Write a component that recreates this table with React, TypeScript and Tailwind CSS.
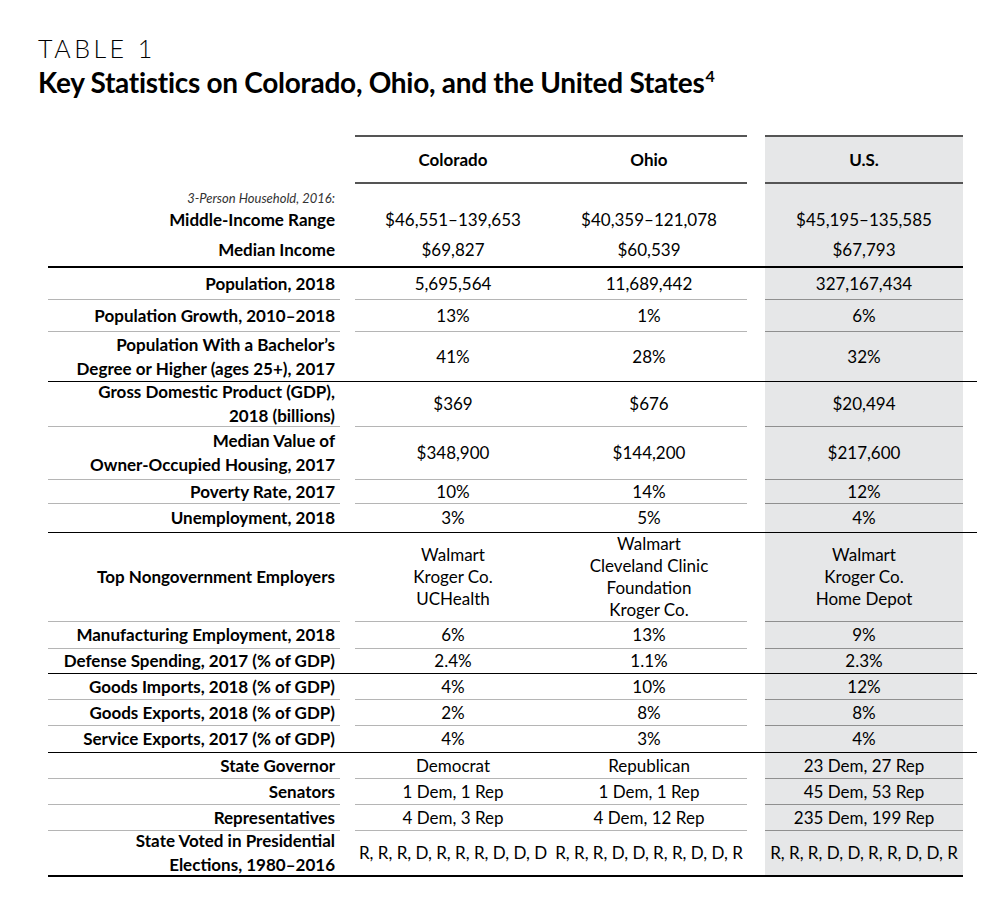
import React from "react";

type Line = "gray" | "none";

type RowProps = {
  label: React.ReactNode;
  co: React.ReactNode;
  oh: React.ReactNode;
  us: React.ReactNode;
  h: string;
  line?: Line;
};

function Row({ label, co, oh, us, h, line = "gray" }: RowProps) {
  const b = line === "gray";
  return (
    <div className={`flex ${h}`}>
      <div
        className={`w-[292px] flex items-center justify-end pr-[5px] text-right font-bold leading-[24px] ${
          b ? "border-b border-[#b5b5b5]" : ""
        }`}
      >
        {label}
      </div>
      <div className="w-[15px]" />
      <div
        className={`w-[196px] flex items-center justify-center text-center leading-[22px] whitespace-nowrap ${
          b ? "border-b border-[#b5b5b5]" : ""
        }`}
      >
        {co}
      </div>
      <div
        className={`w-[196px] flex items-center justify-center text-center leading-[22px] whitespace-nowrap ${
          b ? "border-b border-[#b5b5b5]" : ""
        }`}
      >
        {oh}
      </div>
      <div className="w-[18px]" />
      <div
        className={`w-[198px] bg-[#e6e7e8] flex items-center justify-center text-center leading-[22px] whitespace-nowrap ${
          b ? "border-b border-[#8f8f8f]" : ""
        }`}
      >
        {us}
      </div>
    </div>
  );
}

function BlackLine({ wide = true, thick = false }: { wide?: boolean; thick?: boolean }) {
  return (
    <div
      className={`${wide ? "w-[929px]" : "w-[915px]"} ${thick ? "h-[2px]" : "h-px"} bg-black`}
    />
  );
}

function Stack({ items }: { items: string[] }) {
  return (
    <div className="flex flex-col items-center">
      {items.map((t) => (
        <span key={t}>{t}</span>
      ))}
    </div>
  );
}

export default function App() {
  return (
    <div
      className="w-[1000px] h-[905px] bg-white text-black overflow-hidden"
      style={{ fontFamily: "Lato, 'Open Sans', sans-serif" }}
    >
      <div className="pl-[38px] pt-[34px]">
        <div className="text-[25px] font-light tracking-[0.14em] leading-[28px]">TABLE 1</div>
        <div className="text-[28px] font-bold leading-[36px] tracking-[-0.01em] mt-[2px]">
          Key Statistics on Colorado, Ohio, and the United States
          <sup className="text-[16px] relative -top-[11px] ml-[1px]">4</sup>
        </div>
      </div>

      <div className="pl-[48px] mt-[35px] text-[17px]">
        {/* header */}
        <div className="flex">
          <div className="w-[307px]" />
          <div className="w-[392px] flex flex-col">
            <div className="h-[2px] bg-[#555]" />
            <div className="flex h-[45px]">
              <div className="w-[196px] flex items-center justify-center font-bold">Colorado</div>
              <div className="w-[196px] flex items-center justify-center font-bold">Ohio</div>
            </div>
            <div className="h-[2px] bg-[#555]" />
          </div>
          <div className="w-[18px]" />
          <div className="w-[198px] flex flex-col bg-[#e6e7e8]">
            <div className="h-[2px] bg-[#555]" />
            <div className="h-[45px] flex items-center justify-center font-bold">U.S.</div>
            <div className="h-[2px] bg-[#555]" />
          </div>
        </div>

        {/* income block */}
        <Row
          h="h-[22px]"
          line="none"
          label={<span className="italic font-normal text-[13px] text-[#333] pt-[6px]">3-Person Household, 2016:</span>}
          co=""
          oh=""
          us=""
        />
        <Row h="h-[28px]" line="none" label="Middle-Income Range" co="$46,551–139,653" oh="$40,359–121,078" us="$45,195–135,585" />
        <Row h="h-[32px]" line="none" label="Median Income" co="$69,827" oh="$60,539" us="$67,793" />
        <BlackLine wide={false} thick />

        <Row h="h-[32px]" label="Population, 2018" co="5,695,564" oh="11,689,442" us="327,167,434" />
        <Row h="h-[32px]" label="Population Growth, 2010–2018" co="13%" oh="1%" us="6%" />
        <Row
          h="h-[49px]"
          line="none"
          label={
            <span>
              Population With a Bachelor’s
              <br />
              Degree or Higher (ages 25+), 2017
            </span>
          }
          co="41%"
          oh="28%"
          us="32%"
        />
        <BlackLine />
        <Row
          h="h-[45px]"
          label={
            <span>
              Gross Domestic Product (GDP),
              <br />
              2018 (billions)
            </span>
          }
          co="$369"
          oh="$676"
          us="$20,494"
        />
        <Row
          h="h-[53px]"
          label={
            <span>
              Median Value of
              <br />
              Owner-Occupied Housing, 2017
            </span>
          }
          co="$348,900"
          oh="$144,200"
          us="$217,600"
        />
        <Row h="h-[24px]" label="Poverty Rate, 2017" co="10%" oh="14%" us="12%" />
        <Row h="h-[28px]" line="none" label="Unemployment, 2018" co="3%" oh="5%" us="4%" />
        <BlackLine />
        <Row
          h="h-[89px]"
          label="Top Nongovernment Employers"
          co={<Stack items={["Walmart", "Kroger Co.", "UCHealth"]} />}
          oh={<Stack items={["Walmart", "Cleveland Clinic", "Foundation", "Kroger Co."]} />}
          us={<Stack items={["Walmart", "Kroger Co.", "Home Depot"]} />}
        />
        <Row h="h-[27px]" label="Manufacturing Employment, 2018" co="6%" oh="13%" us="9%" />
        <Row h="h-[24px]" line="none" label="Defense Spending, 2017 (% of GDP)" co="2.4%" oh="1.1%" us="2.3%" />
        <BlackLine />
        <Row h="h-[26px]" label="Goods Imports, 2018 (% of GDP)" co="4%" oh="10%" us="12%" />
        <Row h="h-[26px]" label="Goods Exports, 2018 (% of GDP)" co="2%" oh="8%" us="8%" />
        <Row h="h-[26px]" line="none" label="Service Exports, 2017 (% of GDP)" co="4%" oh="3%" us="4%" />
        <BlackLine />
        <Row h="h-[26px]" label="State Governor" co="Democrat" oh="Republican" us="23 Dem, 27 Rep" />
        <Row h="h-[26px]" label="Senators" co="1 Dem, 1 Rep" oh="1 Dem, 1 Rep" us="45 Dem, 53 Rep" />
        <Row h="h-[26px]" label="Representatives" co="4 Dem, 3 Rep" oh="4 Dem, 12 Rep" us="235 Dem, 199 Rep" />
        <Row
          h="h-[44px]"
          line="none"
          label={
            <span>
              State Voted in Presidential
              <br />
              Elections, 1980–2016
            </span>
          }
          co="R, R, R, D, R, R, R, D, D, D"
          oh="R, R, R, D, D, R, R, D, D, R"
          us="R, R, R, D, D, R, R, D, D, R"
        />
        <BlackLine wide={false} thick />
      </div>
    </div>
  );
}
